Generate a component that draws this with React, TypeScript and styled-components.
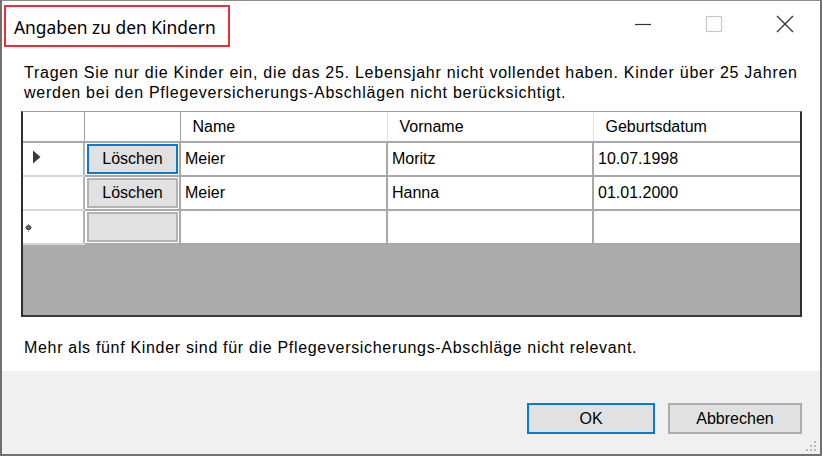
import React from 'react';
import styled, { createGlobalStyle } from 'styled-components';

const GlobalStyle = createGlobalStyle`
  html, body {
    margin: 0;
    padding: 0;
    background: #ffffff;
  }
  * {
    box-sizing: border-box;
  }
`;

const Window = styled.div`
  width: 822px;
  height: 456px;
  display: flex;
  flex-direction: column;
  background: #fff;
  border: 2px solid #707070;
  border-top: 1px solid #8a8a8a;
  font-family: 'Liberation Sans', Arial, sans-serif;
  color: #000;
`;

const TitleBar = styled.div`
  height: 54px;
  display: flex;
  align-items: flex-start;
  justify-content: space-between;
  padding: 4px 0 0 2px;
`;

const TitleBox = styled.div`
  width: 226px;
  height: 42px;
  border: 2px solid #e8303a;
  display: flex;
  align-items: center;
  padding: 2px 0 0 8px;
  font-family: 'Noto Sans', 'Open Sans', sans-serif;
  font-size: 17.4px;
  white-space: nowrap;
`;

const Controls = styled.div`
  display: flex;
  height: 46px;
  margin-top: -4px;
`;

const ControlButton = styled.div`
  width: 71px;
  height: 100%;
  display: flex;
  align-items: center;
  justify-content: center;
`;

const Content = styled.div`
  flex: 1;
  padding: 8px 18px 0 19px;
  display: flex;
  flex-direction: column;
`;

const Intro = styled.p`
  margin: 0 0 8px 3px;
  font-size: 16px;
  line-height: 20px;
  letter-spacing: 0.74px;
  white-space: nowrap;
`;

const GridBox = styled.div`
  width: 781px;
  height: 206px;
  background: #ababab;
  border: 2px solid #2e2e2e;
  border-top: 1px solid #a0a0a0;
  border-bottom: 2px solid #3a3a3a;
  overflow: hidden;
`;

const Table = styled.table`
  width: 777px;
  table-layout: fixed;
  border-collapse: collapse;
  background: #fff;
  font-size: 16px;
`;

const HeadCell = styled.th<{ $first?: boolean }>`
  height: 30px;
  padding: 0 0 0 12px;
  text-align: left;
  font-weight: normal;
  border-bottom: 2px solid #a8a8a8;
  border-right: 1px solid ${(p) => (p.$first ? '#a0a0a0' : '#e4e4e4')};
  &:last-child {
    border-right: none;
  }
`;

const RowHead = styled.td<{ $newRow?: boolean }>`
  height: 34px;
  padding: 0 0 0 ${(p) => (p.$newRow ? 2 : 9)}px;
  border-right: 2px solid #b4b4b4;
  border-bottom: 2px solid #d8d8d8;
  vertical-align: middle;
`;

const Cell = styled.td`
  height: 34px;
  padding: 0 0 0 4px;
  border-right: 2px solid #a8a8a8;
  border-bottom: 2px solid #a8a8a8;
  white-space: nowrap;
  &:last-child {
    border-right: none;
  }
`;

const ButtonCell = styled.td`
  height: 34px;
  padding: 1px 1px 1px 2px;
  border-right: 2px solid #a8a8a8;
  border-bottom: 2px solid #a8a8a8;
`;

const CellButton = styled.div<{ $focused?: boolean }>`
  height: 30px;
  display: flex;
  align-items: center;
  justify-content: center;
  background: #e1e1e1;
  border: ${(p) => (p.$focused ? '2px solid #0a78d4' : '2px solid #b2b2b2')};
  font-size: 16px;
`;

const Note = styled.p`
  margin: 21px 0 0 3px;
  font-size: 16px;
  line-height: 20px;
  letter-spacing: 0.68px;
  white-space: nowrap;
`;

const Footer = styled.div`
  height: 83px;
  background: #f0f0f0;
  display: flex;
  justify-content: flex-end;
  align-items: flex-start;
  gap: 13px;
  padding: 32px 18px 0 0;
  position: relative;
`;

const DialogButton = styled.button<{ $default?: boolean; $w: number }>`
  width: ${(p) => p.$w}px;
  height: 31px;
  background: #e1e1e1;
  border: ${(p) => (p.$default ? '2px solid #0a78d4' : '2px solid #adadad')};
  font-family: 'Liberation Sans', Arial, sans-serif;
  font-size: 16px;
  color: #000;
  padding: 0;
`;

const Grip = styled.svg`
  position: absolute;
  right: 3px;
  bottom: 2px;
`;

const rows = [
  { name: 'Meier', vorname: 'Moritz', datum: '10.07.1998', current: true },
  { name: 'Meier', vorname: 'Hanna', datum: '01.01.2000', current: false },
];

const App: React.FC = () => {
  return (
    <>
      <GlobalStyle />
      <Window>
        <TitleBar>
          <TitleBox>Angaben zu den Kindern</TitleBox>
          <Controls>
            <ControlButton>
              <svg width="18" height="18" viewBox="0 0 18 18">
                <line x1="1" y1="9.5" x2="17" y2="9.5" stroke="#333" strokeWidth="1.2" />
              </svg>
            </ControlButton>
            <ControlButton>
              <svg width="18" height="18" viewBox="0 0 18 18">
                <rect x="1.5" y="1.5" width="15" height="15" fill="none" stroke="#c8c8c8" strokeWidth="1.2" />
              </svg>
            </ControlButton>
            <ControlButton>
              <svg width="18" height="18" viewBox="0 0 18 18">
                <path d="M1 1 L17 17 M17 1 L1 17" stroke="#333" strokeWidth="1.3" />
              </svg>
            </ControlButton>
          </Controls>
        </TitleBar>
        <Content>
          <Intro>
            Tragen Sie nur die Kinder ein, die das 25. Lebensjahr nicht vollendet haben. Kinder über 25 Jahren
            <br />
            werden bei den Pflegeversicherungs-Abschlägen nicht berücksichtigt.
          </Intro>
          <GridBox>
            <Table>
              <colgroup>
                <col style={{ width: 61 }} />
                <col style={{ width: 96 }} />
                <col style={{ width: 207 }} />
                <col style={{ width: 206 }} />
                <col style={{ width: 207 }} />
              </colgroup>
              <thead>
                <tr>
                  <HeadCell $first />
                  <HeadCell $first />
                  <HeadCell>Name</HeadCell>
                  <HeadCell>Vorname</HeadCell>
                  <HeadCell>Geburtsdatum</HeadCell>
                </tr>
              </thead>
              <tbody>
                {rows.map((r, i) => (
                  <tr key={i}>
                    <RowHead>
                      {r.current && (
                        <svg width="9" height="14" viewBox="0 0 9 14">
                          <path d="M1 0.5 L8.5 7 L1 13.5 Z" fill="#3a3a3a" />
                        </svg>
                      )}
                    </RowHead>
                    <ButtonCell>
                      <CellButton $focused={r.current}>Löschen</CellButton>
                    </ButtonCell>
                    <Cell>{r.name}</Cell>
                    <Cell>{r.vorname}</Cell>
                    <Cell>{r.datum}</Cell>
                  </tr>
                ))}
                <tr>
                  <RowHead $newRow>
                    <svg width="7" height="8" viewBox="0 0 7 8">
                      <circle cx="3.5" cy="3.5" r="2.6" fill="#444" />
                      <path d="M3.5 0 V8 M0 3.5 H7" stroke="#777" strokeWidth="0.8" />
                    </svg>
                  </RowHead>
                  <ButtonCell>
                    <CellButton />
                  </ButtonCell>
                  <Cell />
                  <Cell />
                  <Cell />
                </tr>
              </tbody>
            </Table>
          </GridBox>
          <Note>Mehr als fünf Kinder sind für die Pflegeversicherungs-Abschläge nicht relevant.</Note>
        </Content>
        <Footer>
          <DialogButton $default $w={128}>OK</DialogButton>
          <DialogButton $w={134}>Abbrechen</DialogButton>
          <Grip width="12" height="12" viewBox="0 0 12 12">
            {[
              [9, 1],
              [9, 5],
              [5, 5],
              [9, 9],
              [5, 9],
              [1, 9],
            ].map(([x, y], i) => (
              <rect key={i} x={x} y={y} width="2" height="2" fill="#bcbcbc" />
            ))}
          </Grip>
        </Footer>
      </Window>
    </>
  );
};

export default App;
